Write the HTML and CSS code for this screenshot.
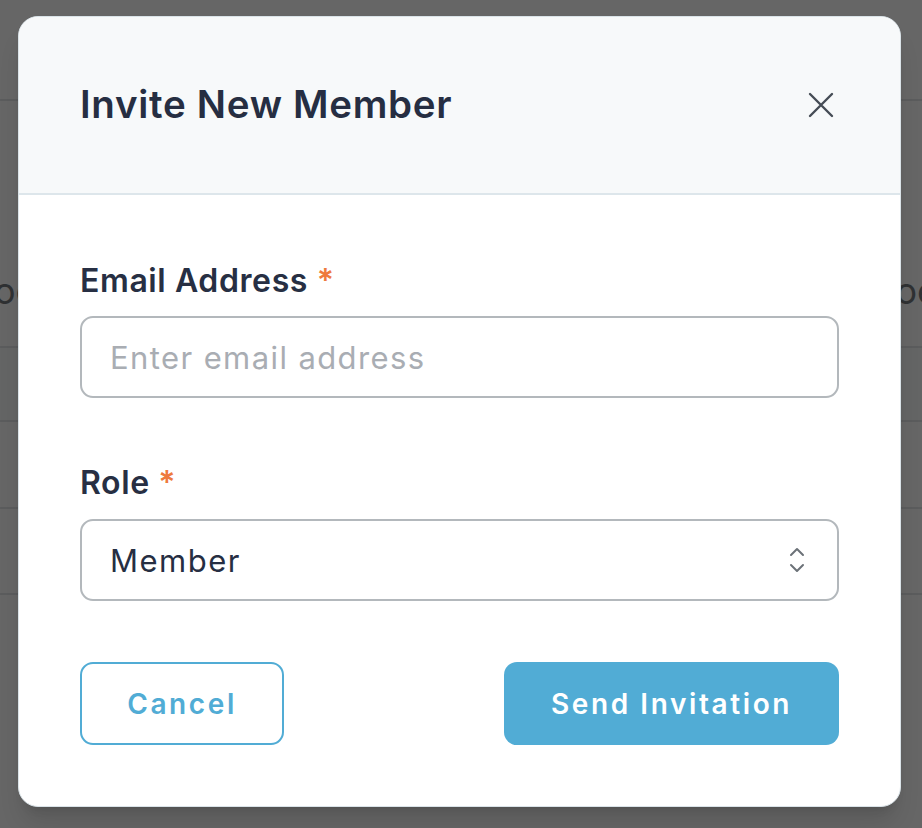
FILE: index.html
```html
<!DOCTYPE html>
<html lang="en">
<head>
<meta charset="utf-8">
<title>Invite New Member</title>
<link rel="stylesheet" href="styles.css">
</head>
<body>
<div class="page">
  <div class="row row-head"></div>
  <div class="row row-tall"><span class="frag frag-left">oc</span><span class="frag frag-right">oe</span></div>
  <div class="row row-a"></div>
  <div class="row row-b"></div>
  <div class="row row-c"></div>
</div>
<div class="overlay">
  <div class="modal" role="dialog" aria-labelledby="modal-title">
    <div class="modal-header">
      <h2 id="modal-title" class="modal-title">Invite New Member</h2>
      <button class="close-btn" aria-label="Close">
        <svg width="26" height="26" viewBox="0 0 26 26" fill="none" stroke="#454c55" stroke-width="2.4" stroke-linecap="round"><path d="M2 2L24 24M24 2L2 24"/></svg>
      </button>
    </div>
    <div class="modal-body">
      <label class="field-label" for="email">Email Address <span class="req">*</span></label>
      <input id="email" class="field-input" type="email" placeholder="Enter email address">
      <label class="field-label field-label-second" for="role">Role <span class="req">*</span></label>
      <div class="select">
        <span class="select-value">Member</span>
        <svg class="chev" width="16" height="26" viewBox="0 0 16 26" fill="none" stroke="#6c7278" stroke-width="2" stroke-linecap="round" stroke-linejoin="round"><path d="M2 8L8 2L14 8M2 18L8 24L14 18"/></svg>
      </div>
      <div class="actions">
        <button class="btn btn-outline">Cancel</button>
        <button class="btn btn-primary">Send Invitation</button>
      </div>
    </div>
  </div>
</div>
</body>
</html>
```
FILE: styles.css
```css
* { box-sizing: border-box; }
html, body { margin: 0; padding: 0; }
body {
  width: 922px;
  height: 828px;
  overflow: hidden;
  background: #666666;
  font-family: Inter, "Noto Sans", sans-serif;
  position: relative;
}
.page { width: 922px; }
.row { border-bottom: 2px solid #5b5c5d; position: relative; }
.row-head { height: 101px; }
.row-tall { height: 247px; display: flex; justify-content: space-between; align-items: flex-start; }
.row-a { height: 74px; background: #646565; }
.row-b { height: 87px; }
.row-c { height: 86px; }
.frag {
  font-size: 36px;
  color: #2f3133;
  line-height: 1;
  margin-top: 172px;
}
.frag-left { margin-left: -6px; }
.frag-right { margin-right: -16px; }

.overlay {
  position: absolute;
  inset: 0;
  padding: 16px 0 0 18px;
}
.modal {
  width: 883px;
  height: 791px;
  background: #ffffff;
  border: 1px solid #dae3e8;
  border-radius: 20px;
  overflow: hidden;
  box-shadow: 0 20px 25px -5px rgba(0,0,0,0.12), 0 8px 10px -6px rgba(0,0,0,0.1);
}
.modal-header {
  height: 178px;
  background: #f7f9fa;
  border-bottom: 2px solid #dde6eb;
  display: flex;
  align-items: center;
  justify-content: space-between;
  padding: 0 66px 0 61px;
}
.modal-title {
  margin: 0;
  font-size: 38.5px;
  font-weight: 600;
  color: #262e42;
  letter-spacing: 0.7px;
  line-height: 48px;
  margin-top: -2px;
}
.close-btn {
  background: none;
  border: 0;
  padding: 0;
  width: 26px;
  height: 26px;
  display: flex;
  cursor: pointer;
}
.modal-body {
  padding: 66px 61px 0 61px;
}
.field-label {
  display: block;
  font-size: 32px;
  line-height: 40px;
  font-weight: 600;
  color: #272f43;
  letter-spacing: 0.6px;
  margin-bottom: 15px;
}
.field-label-second { margin-top: 65px; margin-bottom: 16px; }
.req { color: #ee7a3d; }
.field-input {
  display: block;
  width: 759px;
  height: 82px;
  border: 2px solid #b3b8bc;
  border-radius: 13px;
  padding: 0 28px;
  font-family: inherit;
  font-size: 31px;
  letter-spacing: 1.4px;
  color: #262e42;
  background: #fff;
  outline: none;
}
.field-input::placeholder { color: #a9adb3; }
.select {
  width: 759px;
  height: 82px;
  border: 2px solid #b3b8bc;
  border-radius: 13px;
  padding: 0 32px 0 28px;
  display: flex;
  align-items: center;
  justify-content: space-between;
}
.select-value {
  font-size: 31px;
  letter-spacing: 1.5px;
  color: #262e42;
}
.actions {
  display: flex;
  justify-content: space-between;
  width: 759px;
  margin-top: 61px;
}
.btn {
  height: 83px;
  border-radius: 13px;
  font-family: inherit;
  font-size: 28px;
  font-weight: 600;
  letter-spacing: 2.6px;
  cursor: pointer;
}
.btn-outline {
  width: 204px;
  background: #fff;
  border: 2px solid #51acd5;
  color: #51acd5;
}
.btn-primary {
  width: 335px;
  background: #51acd5;
  border: 0;
  color: #ffffff;
}
```
